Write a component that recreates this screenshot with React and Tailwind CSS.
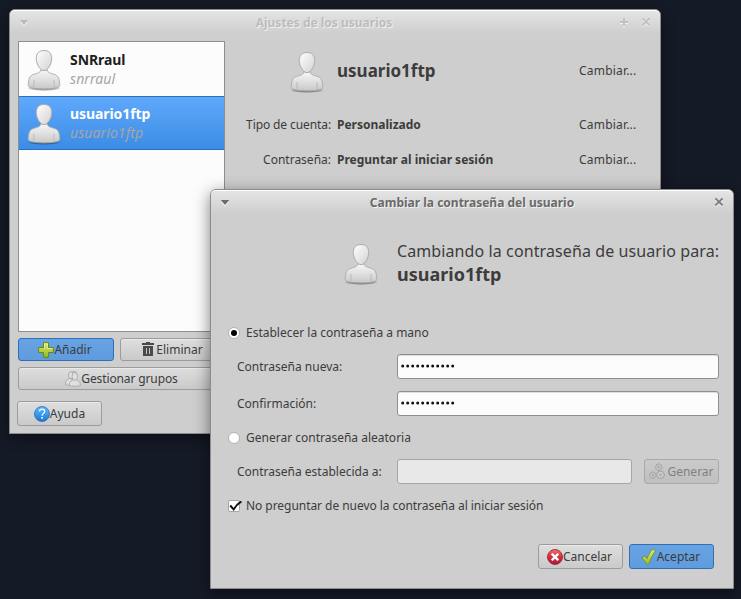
import React from 'react';

function Avatar({ id }) {
  return (
    <svg width="36" height="44" viewBox="0 0 36 44" className="shrink-0 block">
      <defs>
        <linearGradient id={id + 'b'} x1="0" y1="0" x2="0" y2="1">
          <stop offset="0" stopColor="#f6f6f6" />
          <stop offset="0.55" stopColor="#dedede" />
          <stop offset="1" stopColor="#c8c8c8" />
        </linearGradient>
        <linearGradient id={id + 'h'} x1="0" y1="0" x2="1" y2="1">
          <stop offset="0" stopColor="#ffffff" />
          <stop offset="1" stopColor="#d2d2d2" />
        </linearGradient>
        <radialGradient id={id + 's'}>
          <stop offset="0" stopColor="#000" stopOpacity="0.55" />
          <stop offset="0.7" stopColor="#000" stopOpacity="0.3" />
          <stop offset="1" stopColor="#000" stopOpacity="0" />
        </radialGradient>
      </defs>
      <ellipse cx="18" cy="39.2" rx="17" ry="2.8" fill={`url(#${id}s)`} />
      <path d="M14.5 21 C14.5 23.2 13 23.8 9 25 C4.6 26.2 3.4 27.6 2.7 31.6 C2.2 34.5 1.8 36.8 3 37.8 C6 39.4 12 39.9 18 39.9 C24 39.9 30 39.4 33 37.8 C34.2 36.8 33.8 34.5 33.3 31.6 C32.6 27.6 31.4 26.2 27 25 C23 23.8 21.5 23.2 21.5 21 Z" fill={`url(#${id}b)`} stroke="#a8a8a8" strokeWidth="0.9" />
      <path d="M8 31 V38.2 M28 31 V38.2" stroke="#b4b4b4" strokeWidth="0.8" fill="none" />
      <path d="M18 1.5 C12.8 1.5 10.3 4.6 10.3 9.5 C10.3 15.3 14.2 21.6 18 21.6 C21.8 21.6 25.7 15.3 25.7 9.5 C25.7 4.6 23.2 1.5 18 1.5 Z" fill={`url(#${id}h)`} stroke="#ababab" strokeWidth="1" />
    </svg>
  );
}

const PlusIcon = () => (
  <svg width="16" height="16" viewBox="0 0 16 16" className="shrink-0">
    <defs>
      <linearGradient id="plus" x1="0" y1="0" x2="0" y2="1">
        <stop offset="0" stopColor="#dcec6a" />
        <stop offset="1" stopColor="#93b523" />
      </linearGradient>
    </defs>
    <path d="M5.5 0.7 H10.5 V5.5 H15.4 V10.5 H10.5 V15.4 H5.5 V10.5 H0.6 V5.5 H5.5 Z" fill="url(#plus)" stroke="#648c18" />
    <path d="M6.5 6.5 V1.7 H9.5 V6.5 H14.4" fill="none" stroke="#eef7a4" strokeWidth="0.8" opacity="0.8" />
  </svg>
);

const TrashIcon = () => (
  <svg width="16" height="16" viewBox="0 0 16 16" className="shrink-0">
    <path d="M6 0 H10 V1 H14 V3 H2 V1 H6 Z M3 4 H13 V14 H3 Z" fill="#4a4a4a" />
    <path d="M6.5 6 V12 M9.5 6 V12" stroke="#c4c4c4" strokeWidth="1" />
  </svg>
);

const GroupIcon = () => (
  <svg width="16" height="16" viewBox="0 0 16 16" className="shrink-0">
    <g fill="#e0e0e0" stroke="#a6a6a6" strokeWidth="0.9">
      <ellipse cx="9" cy="3.6" rx="2.8" ry="3.2" />
      <path d="M5 7 C3.5 8.6 1 8.4 0.8 10.6 L0.6 13.6 C1.5 14.4 5 14.4 7 14 V8 Z" />
      <ellipse cx="6" cy="4.2" rx="2.6" ry="3.5" />
      <path d="M8 8.6 C7.6 10 5.2 10 4.6 11.4 L4.3 14.4 C6 15.6 13.4 15.6 15.4 14.4 L15 11.6 C14.4 10 11.9 10 11.5 8.6 Z" />
      <ellipse cx="9.8" cy="5.4" rx="2.8" ry="3.9" />
    </g>
  </svg>
);

const HelpIcon = () => (
  <svg width="16" height="16" viewBox="0 0 16 16" className="shrink-0">
    <defs>
      <linearGradient id="help" x1="0" y1="0" x2="0" y2="1">
        <stop offset="0" stopColor="#63b4f5" />
        <stop offset="0.5" stopColor="#3a9cee" />
        <stop offset="1" stopColor="#1c74cf" />
      </linearGradient>
    </defs>
    <circle cx="8" cy="8" r="7.5" fill="url(#help)" stroke="#2a6db4" strokeWidth="0.8" />
    <path d="M5.4 5.4 C5.5 3.9 6.6 3.1 8 3.1 C9.6 3.1 10.7 4 10.7 5.4 C10.7 7.3 8.1 7.5 8.1 9.7" fill="none" stroke="#fff" strokeWidth="1.3" />
    <rect x="7.3" y="11.1" width="1.6" height="1.7" fill="#fff" />
  </svg>
);

const CancelIcon = () => (
  <svg width="16" height="16" viewBox="0 0 16 16" className="shrink-0">
    <defs>
      <linearGradient id="cancel" x1="0" y1="0" x2="0" y2="1">
        <stop offset="0" stopColor="#f0736a" />
        <stop offset="0.5" stopColor="#d42f3a" />
        <stop offset="1" stopColor="#a01c48" />
      </linearGradient>
    </defs>
    <circle cx="8" cy="8" r="7.5" fill="url(#cancel)" stroke="#a12536" strokeWidth="0.9" />
    <path d="M5.6 5.6 L10.4 10.4 M10.4 5.6 L5.6 10.4" stroke="#fff" strokeWidth="2.4" strokeLinecap="square" />
  </svg>
);

const AcceptIcon = () => (
  <svg width="16" height="16" viewBox="0 0 16 16" className="shrink-0">
    <defs>
      <linearGradient id="accept" x1="0" y1="0" x2="0" y2="1">
        <stop offset="0" stopColor="#e0f07a" />
        <stop offset="1" stopColor="#98bb28" />
      </linearGradient>
    </defs>
    <path d="M0.9 8.9 L3.9 6.9 L6 9.6 C7.4 6.2 9.2 3 11.4 0.6 L14.8 1.3 C11.8 5.2 9.6 9.6 7.8 15.2 L5.6 15.3 C4.4 12.6 2.8 10.6 0.9 8.9 Z" fill="url(#accept)" stroke="#6f9420" strokeWidth="0.9" strokeLinejoin="round" />
  </svg>
);

const GearsIcon = () => (
  <svg width="16" height="17" viewBox="0 0 16 17" className="shrink-0" fill="none">
    {[[9.7, 4.2, 3.2], [3.8, 12.1, 3.1], [11.6, 11.7, 3.7]].map(([x, y, r], i) => (
      <g key={i}>
        <circle cx={x} cy={y} r={r} stroke="#a4a4a4" strokeWidth="1.4" strokeDasharray="1.5 0.9" />
        <circle cx={x} cy={y} r={r - 0.4} stroke="#a8a8a8" strokeWidth="0.8" fill="#d0d0d0" />
        <circle cx={x} cy={y} r="1" stroke="#a0a0a0" strokeWidth="0.9" fill="#c2c2c2" />
      </g>
    ))}
  </svg>
);

const MenuArrow = ({ color, light }) => (
  <svg width="10" height="7" viewBox="0 0 10 7" className="relative top-px block">
    <path d="M1 1.5 H9 L5 6.5 Z" fill={light} />
    <path d="M0.8 0 H9.2 L5 5 Z" fill={color} />
  </svg>
);

const CloseIcon = ({ color }) => (
  <svg width="10" height="11" viewBox="0 0 10 11" className="block">
    <path d="M1.6 2.6 L8.4 9.2 M8.4 2.6 L1.6 9.2" stroke="#f4f4f4" strokeWidth="1.8" />
    <path d="M1.4 1.4 L8.6 8.4 M8.6 1.4 L1.4 8.4" stroke={color} strokeWidth="1.9" />
  </svg>
);

const MaxIcon = () => (
  <svg width="10" height="11" viewBox="0 0 10 11" className="block">
    <path d="M5 2 V10 M1 6 H9" stroke="#f2f2f2" strokeWidth="2" />
    <path d="M5 1 V9 M1 5 H9" stroke="#c2c2c2" strokeWidth="2" />
  </svg>
);

function Button({ icon, children, tone = 'normal', className = '' }) {
  const tones = {
    normal: 'border-[#9c9c9c] bg-linear-to-b from-[#dedede] to-[#cacaca] text-[#3c3c3c] shadow-[inset_0_1px_0_#e9e9e9]',
    blue: 'border-[#2f6fb8] bg-linear-to-b from-[#68a3e3] to-[#5f9cdd] text-[#3c3c3c]',
    disabled: 'border-[#a9a9a9] bg-linear-to-b from-[#cbcbcb] to-[#bfbfbf] text-[#808080]',
  };
  return (
    <button className={`flex items-center justify-center rounded-[3px] border whitespace-nowrap leading-4 ${tones[tone]} ${className}`}>
      {icon}
      {children}
    </button>
  );
}

function UserRow({ id, name, login, selected }) {
  return (
    <div className={`flex h-[54px] items-center pl-[7px] ${selected ? 'border-y border-[#2e70bd] bg-linear-to-b from-[#5fa9fb] to-[#3b8ce6]' : ''}`}>
      <div className="pt-1"><Avatar id={id} /></div>
      <div className="ml-2 flex flex-col text-[14px] leading-[19px]">
        <span className={`font-bold tracking-[-0.08px] ${selected ? 'text-white' : 'text-[#1e1e1e]'}`}>{name}</span>
        <span className="italic tracking-[0.08px] text-[#a6a6a6]">{login}</span>
      </div>
    </div>
  );
}

const Radio = ({ checked }) => (
  <span className="flex size-3 items-center justify-center rounded-full border border-[#b2b2b2] bg-white">
    {checked && <span className="size-[6px] rounded-full bg-black" />}
  </span>
);

function Password() {
  return (
    <div className="flex h-[25px] w-[322px] items-center rounded-[3px] border border-[#8e8e8e] bg-[#fcfcfc] pl-[3px] pb-px shadow-[inset_0_1px_0_#dedede]">
      <svg width="56" height="4" viewBox="0 0 56 4">
        {Array.from({ length: 11 }, (_, i) => (
          <circle key={i} cx={1.7 + i * 5} cy="2" r="1.5" fill="#111" />
        ))}
      </svg>
    </div>
  );
}

const Change = () => <span className="tracking-[0.2px]">Cambiar...</span>;

export default function App() {
  return (
    <div className="relative h-[599px] w-[741px] overflow-hidden bg-[#151a27] font-['Noto_Sans',sans-serif] text-[12px] leading-4 text-[#3c3c3c]">
      <section className="absolute left-[9px] top-[9px] flex h-[425px] w-[652px] flex-col overflow-visible rounded-t-[6px] border border-[#8c8c8c] bg-[#cecece] shadow-[0_4px_14px_rgba(0,0,0,0.45)]">
        <header className="flex h-6 shrink-0 items-center rounded-t-[5px] border-t border-white bg-linear-to-b from-[#e4e4e4] to-[#cecece] px-[9px]">
          <MenuArrow color="#bababa" light="#f0f0f0" />
          <h1 className="flex-1 text-center font-bold text-[#bdbdbd] [text-shadow:1px_1px_0_#f0f0f0]">Ajustes de los usuarios</h1>
          <div className="flex gap-3">
            <MaxIcon />
            <CloseIcon color="#c0c0c0" />
          </div>
        </header>
        <div className="flex pl-2 pt-[7px]">
          <aside className="flex w-[207px] flex-col">
            <div className="h-[291px] border border-[#8e8e8e] bg-[#fcfcfc]">
              <UserRow id="u1" name="SNRraul" login="snrraul" />
              <UserRow id="u2" name="usuario1ftp" login="usuario1ftp" selected />
            </div>
            <div className="mt-1.5 flex gap-1.5">
              <Button tone="blue" icon={<PlusIcon />} className="h-[23px] w-24 pr-0.5">Añadir</Button>
              <Button icon={<TrashIcon />} className="h-[23px] flex-1 pr-0.5">Eliminar</Button>
            </div>
            <Button icon={<GroupIcon />} className="mt-1.5 h-[23px] tracking-[-0.12px]">Gestionar grupos</Button>
            <Button icon={<HelpIcon />} className="-ml-px mt-[11px] h-[25px] w-[85px]">Ayuda</Button>
          </aside>
          <main className="flex-1">
            <div className="mt-[9px] flex h-11 items-center">
              <span className="ml-16 mt-0.5"><Avatar id="u3" /></span>
              <span className="-mt-[3px] ml-3 w-[242px] text-[17px] leading-6 font-bold">usuario1ftp</span>
              <span className="-mt-0.5"><Change /></span>
            </div>
            <div className="mt-[23px] flex">
              <span className="w-[106px] text-right tracking-[-0.1px]">Tipo de cuenta:</span>
              <span className="ml-1.5 w-[242px] font-bold">Personalizado</span>
              <Change />
            </div>
            <div className="mt-[19px] flex">
              <span className="w-[106px] text-right">Contraseña:</span>
              <span className="ml-1.5 w-[242px] font-bold">Preguntar al iniciar sesión</span>
              <Change />
            </div>
          </main>
        </div>
      </section>

      <section className="absolute left-[210px] top-[189px] flex h-[400px] w-[524px] flex-col rounded-t-[6px] border border-[#8c8c8c] bg-[#cecece] shadow-[0_4px_16px_rgba(0,0,0,0.5)]">
        <header className="flex h-6 shrink-0 items-center rounded-t-[5px] border-t border-white bg-linear-to-b from-[#e4e4e4] to-[#cecece] px-[9px]">
          <MenuArrow color="#6c6c6c" light="#f4f4f4" />
          <h2 className="flex-1 text-center font-bold text-[#6a6a6a] [text-shadow:1px_1px_0_#f0f0f0]">Cambiar la contraseña del usuario</h2>
          <CloseIcon color="#7c7c7c" />
        </header>
        <div className="mt-7 flex h-[46px] pl-[132px]">
          <div className="pt-px"><Avatar id="u4" /></div>
          <p className="ml-[18px] -mt-[2px] whitespace-nowrap text-[16px] leading-[23px]">
            <span className="tracking-[0.1px]">Cambiando la contraseña de usuario para:</span><br />
            <b className="text-[18px]">usuario1ftp</b>
          </p>
        </div>
        <label className="mt-[37px] flex items-center gap-1.5 pl-[17px]">
          <Radio checked />
          Establecer la contraseña a mano
        </label>
        <div className="mt-[13px] flex items-center pl-[26px]">
          <span className="w-40">Contraseña nueva:</span>
          <Password />
        </div>
        <div className="mt-3 flex items-center pl-[26px]">
          <span className="w-40">Confirmación:</span>
          <Password />
        </div>
        <label className="mt-[14px] flex items-center gap-1.5 pl-[17px]">
          <Radio />
          Generar contraseña aleatoria
        </label>
        <div className="mt-[13px] flex items-center pl-[26px]">
          <span className="w-40">Contraseña establecida a:</span>
          <span className="h-[25px] w-[235px] rounded-[3px] border border-[#a6a6a6] bg-[#e8e8e8]" />
          <Button tone="disabled" icon={<span className="mr-0.5"><GearsIcon /></span>} className="ml-3 h-[25px] w-[75px]">Generar</Button>
        </div>
        <label className="mt-[14px] flex items-center gap-1.5 pl-[17px] tracking-[-0.05px]">
          <span className="flex size-3 rounded-[2px] border border-[#a6a6a6] bg-white">
            <svg width="13" height="11" viewBox="0 0 13 11" className="shrink-0">
              <path d="M1.2 4.5 L4.6 8.4 Q7.5 3.4 12.4 0.4" fill="none" stroke="#111" strokeWidth="2" />
            </svg>
          </span>
          No preguntar de nuevo la contraseña al iniciar sesión
        </label>
        <footer className="mt-[30px] flex justify-end gap-1.5 pr-[19px]">
          <Button icon={<CancelIcon />} className="h-[25px] w-[85px] pr-0.5">Cancelar</Button>
          <Button tone="blue" icon={<AcceptIcon />} className="h-[25px] w-[85px] pr-0.5">Aceptar</Button>
        </footer>
      </section>
    </div>
  );
}
